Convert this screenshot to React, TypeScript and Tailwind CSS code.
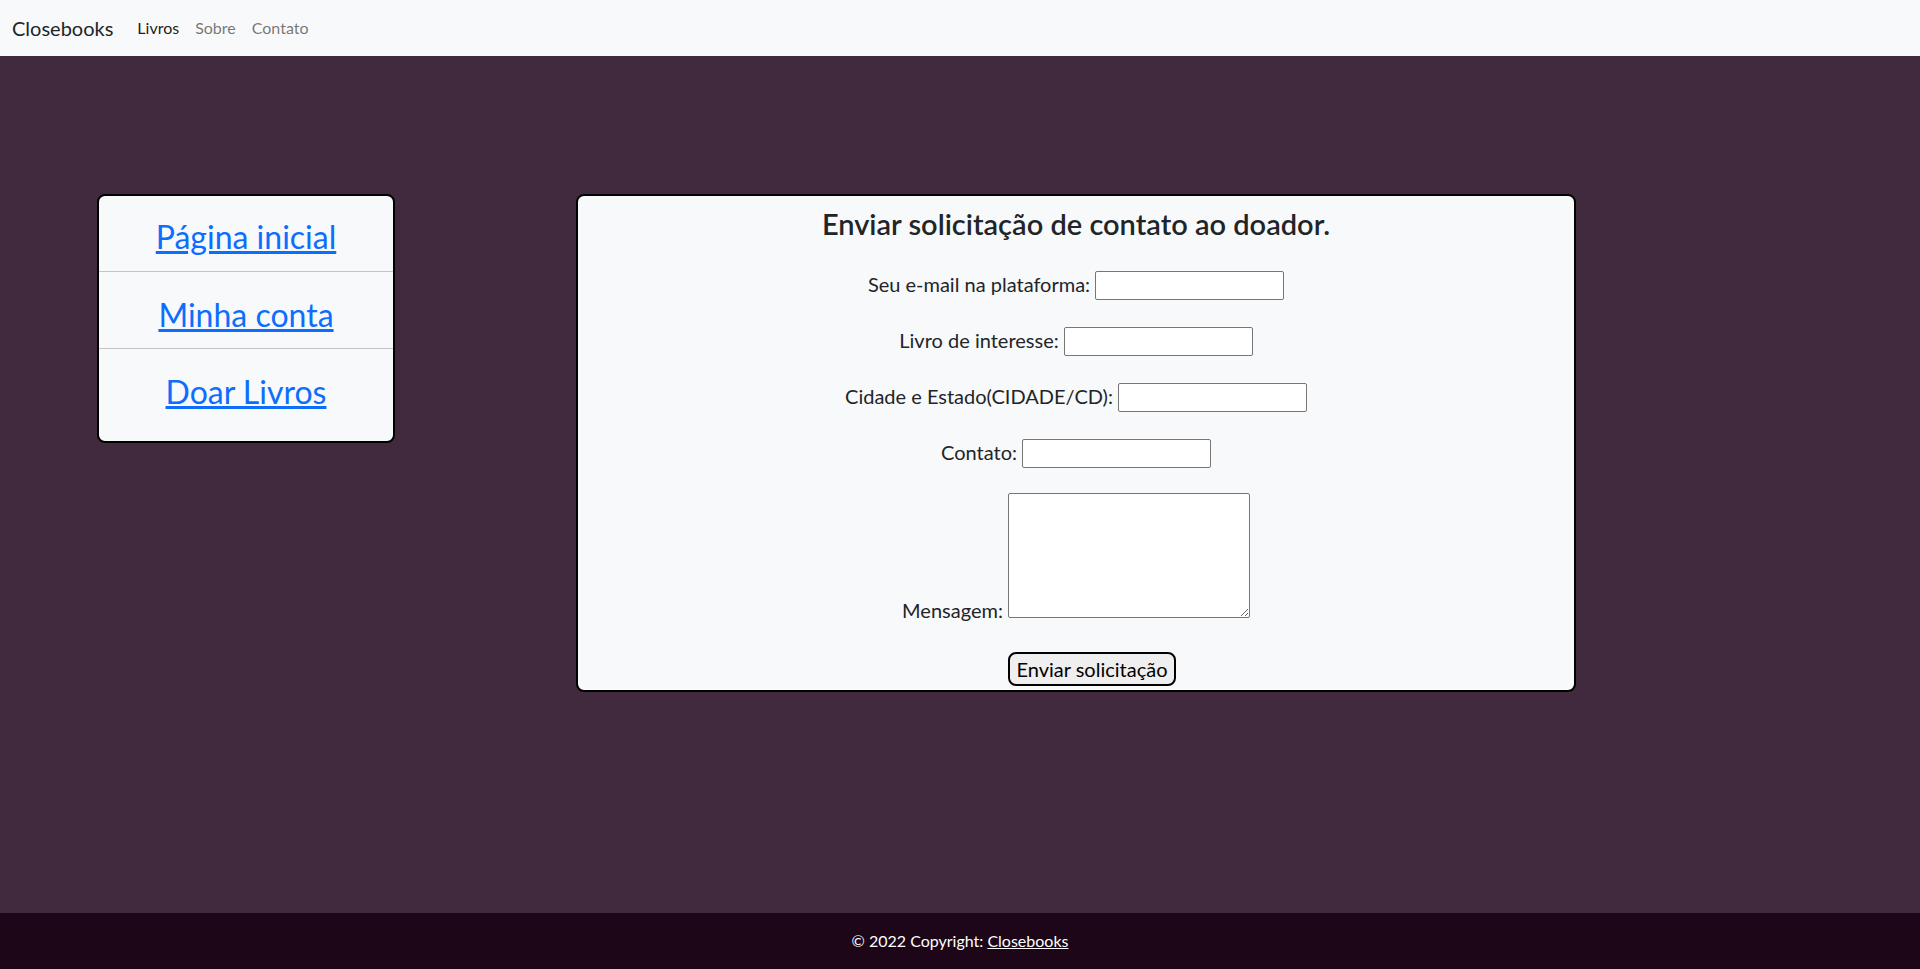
import React from "react";

const font = { fontFamily: "Lato, 'Noto Sans', sans-serif" };

const fields = [
  { id: "email", label: "Seu e-mail na plataforma:" },
  { id: "livro", label: "Livro de interesse:" },
  { id: "cidade", label: "Cidade e Estado(CIDADE/CD):" },
  { id: "contato", label: "Contato:" },
];

const Navbar = () => (
  <nav className="h-[56px] bg-[#f8f9fa] flex items-center px-3">
    <a href="#" className="text-[20px] text-[#212529] mr-4 leading-none">
      Closebooks
    </a>
    <a href="#" className="text-[16px] text-black/90 px-2">Livros</a>
    <a href="#" className="text-[16px] text-black/55 px-2">Sobre</a>
    <a href="#" className="text-[16px] text-black/55 px-2">Contato</a>
  </nav>
);

const Sidebar = () => (
  <div className="w-[298px] border-2 border-black rounded-[8px] bg-[#f8f9fa] overflow-hidden">
    <div className="pt-[25px] pb-[18px] text-center text-[32px] leading-[32px]">
      <a href="#" className="text-[#0d6efd] underline">Página inicial</a>
    </div>
    <div className="border-t border-[#c4c4c4] pt-[27px] pb-[17px] text-center text-[32px] leading-[32px]">
      <a href="#" className="text-[#0d6efd] underline">Minha conta</a>
    </div>
    <div className="border-t border-[#c4c4c4] pt-[27px] pb-[33px] text-center text-[32px] leading-[32px]">
      <a href="#" className="text-[#0d6efd] underline">Doar Livros</a>
    </div>
  </div>
);

const ContactForm = () => (
  <form
    className="w-[1000px] border-2 border-black rounded-[8px] bg-[#f8f9fa] flex flex-col items-center pb-[4px] text-[#212529]"
    onSubmit={(e) => e.preventDefault()}
  >
    <h3 className="mt-[11px] text-[29px] leading-[34px] font-semibold">
      Enviar solicitação de contato ao doador.
    </h3>
    {fields.map((f, i) => (
      <div
        key={f.id}
        className={`flex items-center gap-[5px] h-[29px] ${i === 0 ? "mt-[30px]" : "mt-[27px]"}`}
      >
        <label htmlFor={f.id} className="text-[20px] leading-none pb-[4px]">
          {f.label}
        </label>
        <input
          id={f.id}
          type="text"
          className="w-[189px] h-[29px] bg-white border border-[#767676] rounded-[2px] px-1 text-[16px]"
        />
      </div>
    ))}
    <div className="flex items-end gap-[5px] mt-[25px]">
      <label htmlFor="mensagem" className="text-[20px] leading-none mb-[-2px]">
        Mensagem:
      </label>
      <textarea
        id="mensagem"
        className="w-[242px] h-[125px] bg-white border border-[#767676] rounded-[2px] p-1 text-[16px]"
      />
    </div>
    <div className="mt-[34px] pl-[32px]">
      <button
        type="submit"
        className="h-[34px] px-[6px] border-2 border-black rounded-[8px] bg-[#efefef] text-[20px] leading-none text-black"
      >
        Enviar solicitação
      </button>
    </div>
  </form>
);

export default function App() {
  return (
    <div className="h-screen overflow-hidden flex flex-col bg-[#412a3e]" style={font}>
      <Navbar />
      <main className="flex-1 flex items-start pt-[138px] pl-[97px]">
        <Sidebar />
        <div className="ml-[181px]">
          <ContactForm />
        </div>
      </main>
      <footer className="h-[56px] bg-[#1c0618] flex items-center justify-center text-white text-[16px]">
        <span>
          © 2022 Copyright: <a href="#" className="underline text-white">Closebooks</a>
        </span>
      </footer>
    </div>
  );
}
